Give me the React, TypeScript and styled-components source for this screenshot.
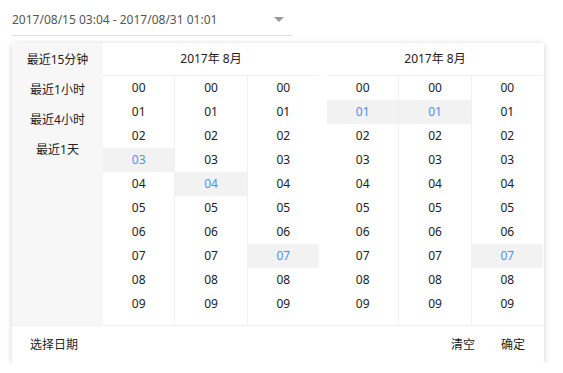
import * as React from 'react';
import styled, { createGlobalStyle } from 'styled-components';

const GlobalStyle = createGlobalStyle`
  body {
    margin: 0;
    background: #fff;
    font-family: "Noto Sans", "Noto Sans CJK SC", sans-serif;
    font-size: 12px;
    color: #222;
  }
`;

const Page = styled.div`
  padding: 0 12px;
`;

const Input = styled.div`
  width: 280px;
  height: 36px;
  border-bottom: 1px solid #e0e0e0;
  display: flex;
  align-items: center;
  justify-content: space-between;
  color: #555;
  font-size: 12px;
  box-sizing: border-box;
  padding-top: 3px;
`;

const Arrow = styled.span`
  width: 0;
  height: 0;
  border-left: 5px solid transparent;
  border-right: 5px solid transparent;
  border-top: 5px solid #999;
  margin-right: 8px;
`;

const Panel = styled.div`
  margin-top: 7px;
  width: 532px;
  background: #fff;
  border-radius: 2px;
  box-shadow: 0 1px 6px rgba(0, 0, 0, 0.18);
  display: flex;
  flex-direction: column;
`;

const Body = styled.div`
  display: flex;
`;

const Sidebar = styled.div`
  width: 91px;
  background: #f7f7f7;
  padding-top: 2px;
`;

const Shortcut = styled.div`
  height: 30px;
  line-height: 30px;
  text-align: center;
  cursor: pointer;
`;

const Calendars = styled.div`
  display: flex;
  gap: 8px;
`;

const Calendar = styled.div`
  width: 216px;
`;

const Header = styled.div`
  height: 32px;
  line-height: 32px;
  text-align: center;
  border-bottom: 1px solid #f0f0f0;
`;

const Columns = styled.div`
  display: flex;
  height: 249px;
  overflow: hidden;
`;

const Column = styled.div`
  flex: 1;
  & + & {
    border-left: 1px solid #f0f0f0;
  }
`;

const Cell = styled.div<{ $active?: boolean }>`
  height: 24px;
  line-height: 24px;
  text-align: center;
  background: ${p => (p.$active ? '#f2f2f2' : 'transparent')};
  color: ${p => (p.$active ? '#4a90f5' : '#222')};
`;

const Footer = styled.div`
  height: 38px;
  border-top: 1px solid #f0f0f0;
  display: flex;
  align-items: center;
  gap: 26px;
  padding: 0 19px 2px 18px;
  box-sizing: border-box;
`;

const Spacer = styled.div`
  flex: 1;
`;

const FooterLink = styled.span`
  cursor: pointer;
`;

const nums = Array.from({ length: 10 }, (_, i) => `0${i}`);

const TimeColumn = ({ active }: { active: number }) => (
  <Column>
    {nums.map((n, i) => (
      <Cell key={n} $active={i === active}>{n}</Cell>
    ))}
  </Column>
);

const CalendarBlock = ({ selected }: { selected: number[] }) => (
  <Calendar>
    <Header>2017年 8月</Header>
    <Columns>
      {selected.map((s, i) => (
        <TimeColumn key={i} active={s} />
      ))}
    </Columns>
  </Calendar>
);

export default function App() {
  return (
    <Page>
      <GlobalStyle />
      <Input>
        <span>2017/08/15 03:04 - 2017/08/31 01:01</span>
        <Arrow />
      </Input>
      <Panel>
        <Body>
          <Sidebar>
            <Shortcut>最近15分钟</Shortcut>
            <Shortcut>最近1小时</Shortcut>
            <Shortcut>最近4小时</Shortcut>
            <Shortcut>最近1天</Shortcut>
          </Sidebar>
          <Calendars>
            <CalendarBlock selected={[3, 4, 7]} />
            <CalendarBlock selected={[1, 1, 7]} />
          </Calendars>
        </Body>
        <Footer>
          <FooterLink>选择日期</FooterLink>
          <Spacer />
          <FooterLink>清空</FooterLink>
          <FooterLink>确定</FooterLink>
        </Footer>
      </Panel>
    </Page>
  );
}
